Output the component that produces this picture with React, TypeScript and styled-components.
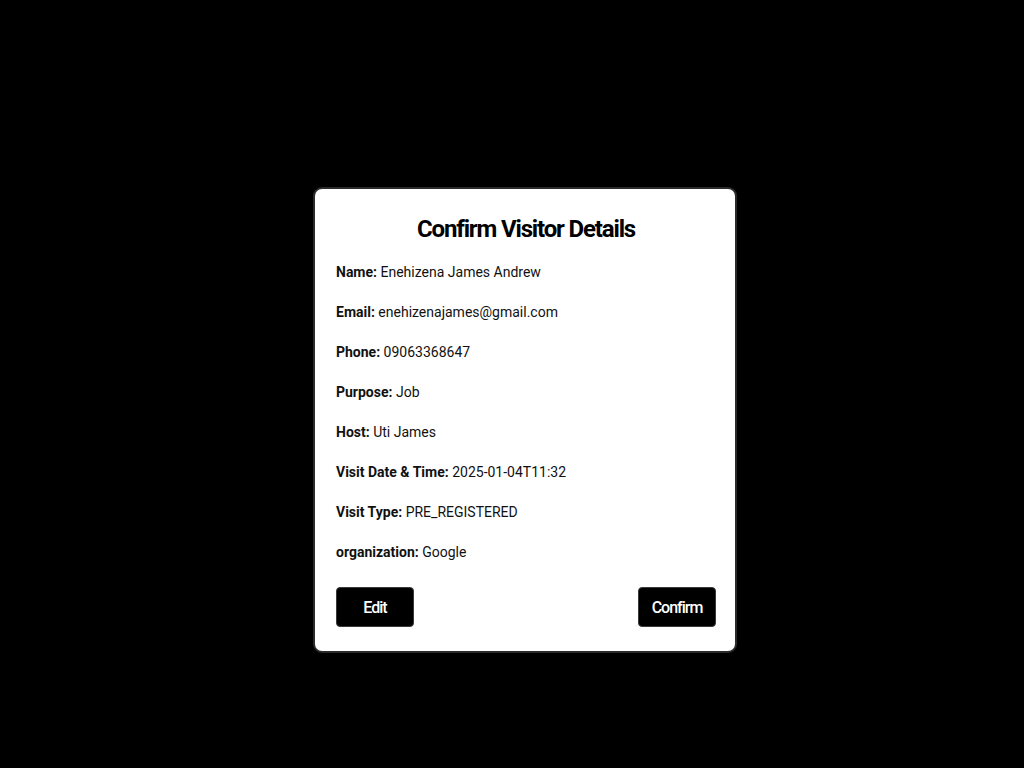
import React from "react";
import styled, { createGlobalStyle } from "styled-components";

const Global = createGlobalStyle`
  html, body { margin: 0; padding: 0; background: #000; }
  body { font-family: Roboto, "Noto Sans", sans-serif; }
  * { box-sizing: border-box; }
`;

const Overlay = styled.div`
  width: 1024px;
  height: 768px;
  background: #000;
  display: flex;
  align-items: flex-start;
  justify-content: flex-start;
  padding: 187px 0 0 313px;
`;

const Modal = styled.div`
  width: 424px;
  height: 466px;
  background: #fff;
  border: 2px solid #2b2b2b;
  border-radius: 9px;
  padding: 0 19px 0 21px;
  display: flex;
  flex-direction: column;
`;

const Title = styled.h2`
  margin: 25px 0 0;
  font-size: 24px;
  line-height: 30px;
  font-weight: 700;
  letter-spacing: -1.15px;
  color: #000;
  text-align: center;
`;

const Rows = styled.div`
  display: flex;
  flex-direction: column;
  gap: 20px;
  margin-top: 18px;
`;

const Row = styled.p`
  margin: 0;
  font-size: 14px;
  line-height: 20px;
  color: #111;
`;

const Label = styled.strong`
  font-weight: 700;
`;

const Actions = styled.div`
  display: flex;
  justify-content: space-between;
  margin-top: 25px;
`;

const Button = styled.button`
  width: 78px;
  height: 40px;
  background: #000;
  color: #fff;
  border: 1px solid #3a3a3a;
  border-radius: 4px;
  font-family: Roboto, sans-serif;
  font-size: 16px;
  font-weight: 500;
  letter-spacing: -1px;
  cursor: pointer;
`;

const rows: [string, string][] = [
  ["Name:", "Enehizena James Andrew"],
  ["Email:", "enehizenajames@gmail.com"],
  ["Phone:", "09063368647"],
  ["Purpose:", "Job"],
  ["Host:", "Uti James"],
  ["Visit Date & Time:", "2025-01-04T11:32"],
  ["Visit Type:", "PRE_REGISTERED"],
  ["organization:", "Google"],
];

export default function App() {
  return (
    <>
      <Global />
      <Overlay>
        <Modal>
          <Title>Confirm Visitor Details</Title>
          <Rows>
            {rows.map(([l, v]) => (
              <Row key={l}>
                <Label>{l}</Label> {v}
              </Row>
            ))}
          </Rows>
          <Actions>
            <Button>Edit</Button>
            <Button>Confirm</Button>
          </Actions>
        </Modal>
      </Overlay>
    </>
  );
}
